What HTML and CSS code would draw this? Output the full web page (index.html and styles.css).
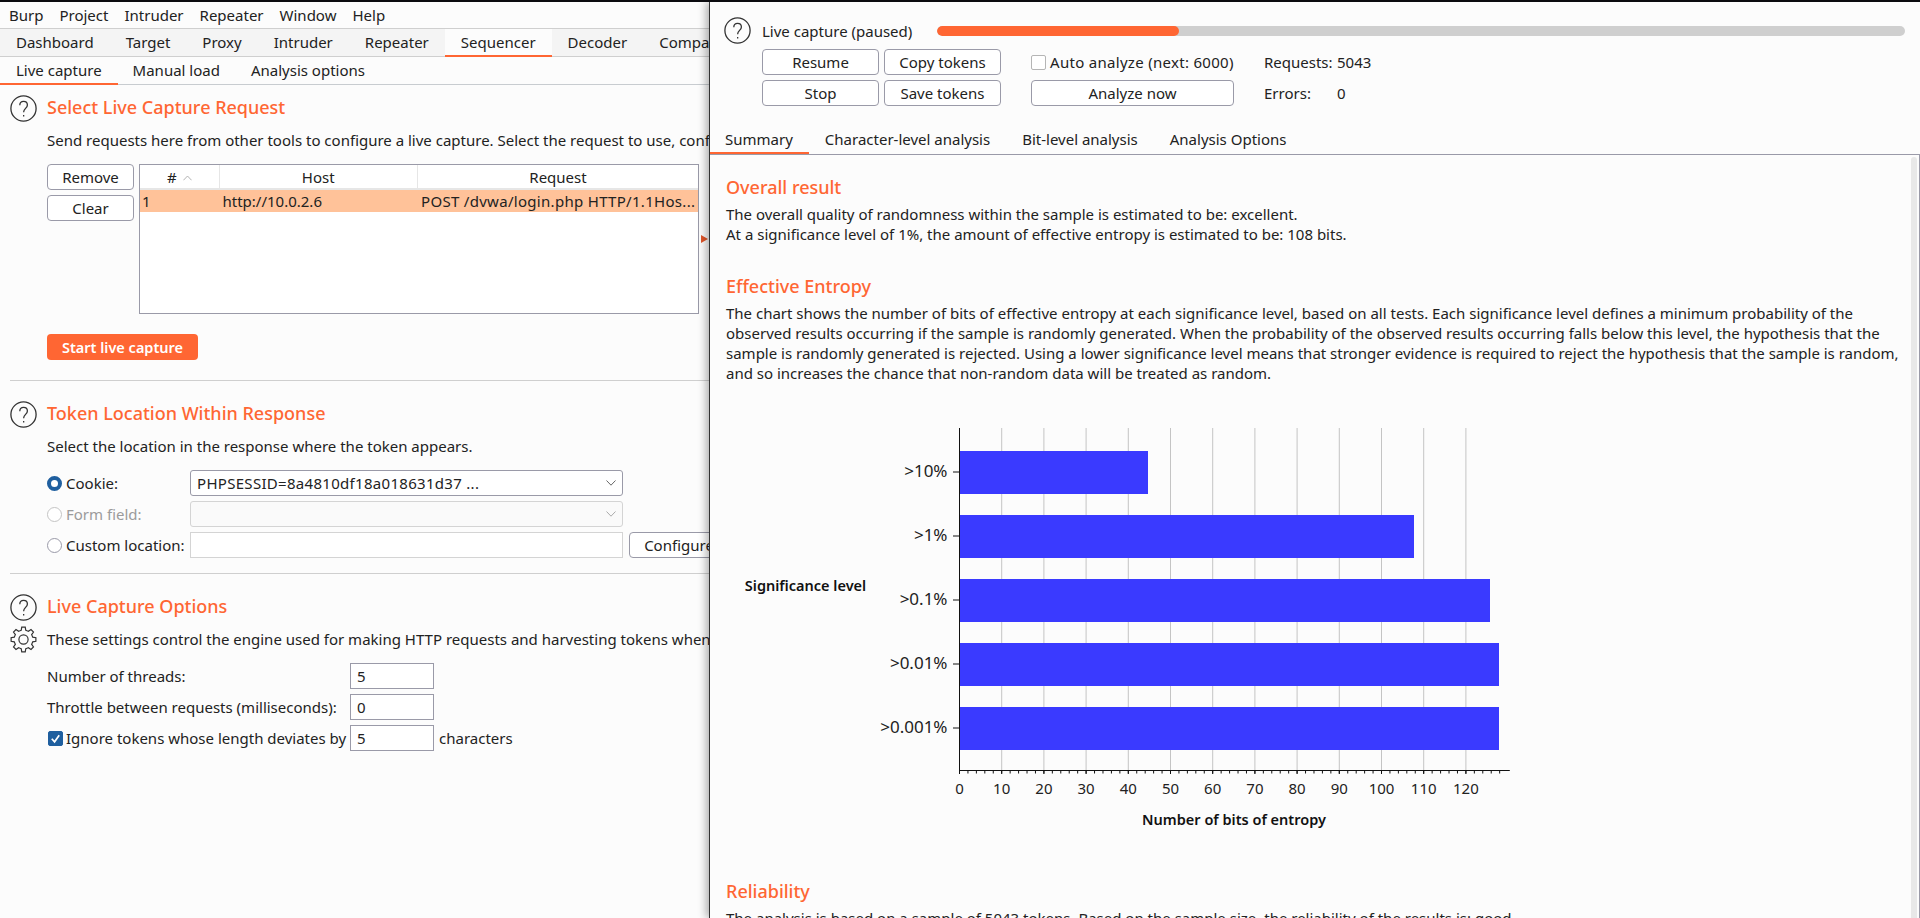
FILE: index.html
```html
<!DOCTYPE html>
<html lang="en">
<head>
<meta charset="utf-8">
<title>Burp Suite Sequencer</title>
<link rel="stylesheet" href="styles.css">
</head>
<body>
<svg class="defs" width="0" height="0" aria-hidden="true">
  <symbol id="help" viewBox="0 0 27 27">
    <circle cx="13.5" cy="13.5" r="12.6" fill="none" stroke="#333" stroke-width="1.3"/>
    <path d="M9.8 10.2c0-2.5 1.7-3.9 3.8-3.9s3.8 1.4 3.8 3.6c0 3.4-3.8 3.6-3.8 7.3" fill="none" stroke="#333" stroke-width="1.3"/>
    <path d="M13 20h1.3v1.6H13z" fill="#333"/>
  </symbol>
  <symbol id="gear" viewBox="-13.5 -13.5 27 27">
    <g fill="none" stroke="#333" stroke-width="1.2">
      <circle r="4.6"/>
      <path id="tooth" d="M-3.64 -8.78L-2.3 -9.22L-1.74 -12.38L1.74 -12.38L2.3 -9.22L3.64 -8.78"/>
      <use href="#tooth" transform="rotate(45)"/>
      <use href="#tooth" transform="rotate(90)"/>
      <use href="#tooth" transform="rotate(135)"/>
      <use href="#tooth" transform="rotate(180)"/>
      <use href="#tooth" transform="rotate(225)"/>
      <use href="#tooth" transform="rotate(270)"/>
      <use href="#tooth" transform="rotate(315)"/>
    </g>
  </symbol>
  <symbol id="chev" viewBox="0 0 10 6">
    <path d="M.5.5 5 5.2 9.5.5" fill="none" stroke="currentColor" stroke-width="1"/>
  </symbol>
</svg>

<div class="desktop">
  <main class="main-window">
    <nav class="menubar">
      <span>Burp</span><span>Project</span><span>Intruder</span><span>Repeater</span><span>Window</span><span>Help</span>
    </nav>
    <nav class="tabs">
      <span class="tab">Dashboard</span>
      <span class="tab">Target</span>
      <span class="tab">Proxy</span>
      <span class="tab">Intruder</span>
      <span class="tab">Repeater</span>
      <span class="tab tab-active">Sequencer</span>
      <span class="tab">Decoder</span>
      <span class="tab">Comparer</span>
    </nav>
    <nav class="subtabs">
      <span class="subtab subtab-active">Live capture</span>
      <span class="subtab">Manual load</span>
      <span class="subtab">Analysis options</span>
    </nav>

    <section class="section section-first">
      <svg class="help-icon"><use href="#help"/></svg>
      <h2 class="section-title">Select Live Capture Request</h2>
      <p class="section-desc">Send requests here from other tools to configure a live capture. Select the request to use, configure the other options below, then click "Start live capture".</p>
      <div class="request-area">
        <div class="side-buttons">
          <button class="btn btn-side">Remove</button>
          <button class="btn btn-side">Clear</button>
        </div>
        <div class="req-table">
          <div class="req-head">
            <span class="head-cell">#<svg class="sort-icon"><use href="#chev"/></svg></span>
            <span class="head-cell">Host</span>
            <span class="head-cell">Request</span>
          </div>
          <div class="req-row">
            <span>1</span>
            <span>http://10.0.2.6</span>
            <span class="digits">POST /dvwa/login.php HTTP/1.1Hos...</span>
          </div>
        </div>
      </div>
      <button class="btn-primary">Start live capture</button>
    </section>

    <section class="section section-next">
      <svg class="help-icon"><use href="#help"/></svg>
      <h2 class="section-title">Token Location Within Response</h2>
      <p class="section-desc">Select the location in the response where the token appears.</p>
      <div class="location-form">
        <label class="choice"><span class="radio radio-on"></span>Cookie:</label>
        <div class="combo"><span class="digits">PHPSESSID=8a4810df18a018631d37 ...</span><svg class="combo-chev"><use href="#chev"/></svg></div>
        <span></span>
        <label class="choice choice-off"><span class="radio radio-off"></span>Form field:</label>
        <div class="combo combo-off"><span></span><svg class="combo-chev"><use href="#chev"/></svg></div>
        <span></span>
        <label class="choice"><span class="radio"></span>Custom location:</label>
        <div class="combo combo-input"></div>
        <button class="btn btn-configure">Configure</button>
      </div>
    </section>

    <section class="section section-next">
      <svg class="help-icon"><use href="#help"/></svg>
      <h2 class="section-title">Live Capture Options</h2>
      <svg class="gear-icon"><use href="#gear"/></svg>
      <p class="section-desc">These settings control the engine used for making HTTP requests and harvesting tokens when performing the live capture.</p>
      <div class="options-form">
        <span>Number of threads:</span><input class="num-input" value="5" aria-label="Number of threads"><span></span>
        <span>Throttle between requests (milliseconds):</span><input class="num-input" value="0" aria-label="Throttle"><span></span>
        <label class="choice"><span class="check check-on"><svg viewBox="0 0 14 14"><path d="M3 7.2 6 10.6 11 3.4" fill="none" stroke="#fff" stroke-width="1.8"/></svg></span>Ignore tokens whose length deviates by</label><input class="num-input" value="5" aria-label="Deviation"><span>characters</span>
      </div>
    </section>
    <span class="split-arrow"></span>
  </main>

  <aside class="capture-window">
    <header class="capture-head">
      <div class="capture-top">
        <svg class="help-icon"><use href="#help"/></svg>
        <span class="capture-status">Live capture (paused)</span>
        <div class="progress"><div class="progress-fill"></div></div>
      </div>
      <div class="capture-controls">
        <button class="btn">Resume</button>
        <button class="btn">Copy tokens</button>
        <label class="choice auto-analyze digits"><span class="check"></span>Auto analyze (next: 6000)</label>
        <span class="stat"><span>Requests:</span><span>5043</span></span>
        <button class="btn">Stop</button>
        <button class="btn">Save tokens</button>
        <button class="btn btn-analyze">Analyze now</button>
        <span class="stat"><span>Errors:</span><span>0</span></span>
      </div>
    </header>
    <nav class="result-tabs">
      <span class="result-tab result-tab-active">Summary</span>
      <span class="result-tab">Character-level analysis</span>
      <span class="result-tab">Bit-level analysis</span>
      <span class="result-tab">Analysis Options</span>
    </nav>
    <div class="result-panel">
      <div class="result-body">
        <h3 class="result-title result-title-first">Overall result</h3>
        <p class="result-text">The overall quality of randomness within the sample is estimated to be: excellent.<br>At a significance level of 1%, the amount of effective entropy is estimated to be: 108 bits.</p>
        <h3 class="result-title">Effective Entropy</h3>
        <p class="result-text">The chart shows the number of bits of effective entropy at each significance level, based on all tests. Each significance level defines a minimum probability of the observed results occurring if the sample is randomly generated. When the probability of the observed results occurring falls below this level, the hypothesis that the sample is randomly generated is rejected. Using a lower significance level means that stronger evidence is required to reject the hypothesis that the sample is random, and so increases the chance that non-random data will be treated as random.</p>
        <svg class="chart" width="800" height="420" viewBox="0 0 800 420">
          <g class="chart-grid">
            <path d="M275.7 8V350M317.9 8V350M360.1 8V350M402.3 8V350M444.5 8V350M486.7 8V350M528.9 8V350M571.1 8V350M613.3 8V350M655.5 8V350M697.7 8V350M739.9 8V350"/>
          </g>
          <g class="chart-bars">
            <rect x="233.5" y="31" width="188.5" height="43"/>
            <rect x="233.5" y="95" width="454.5" height="43"/>
            <rect x="233.5" y="159" width="530.5" height="43"/>
            <rect x="233.5" y="223" width="539.5" height="43"/>
            <rect x="233.5" y="287" width="539.5" height="43"/>
          </g>
          <g class="chart-axis">
            <path d="M233.5 8V350.5H783.8"/>
            <path d="M227 52h6M227 116h6M227 180h6M227 244h6M227 308h6"/>
            <path d="M233.5 350V354M275.7 350V354M317.9 350V354M360.1 350V354M402.3 350V354M444.5 350V354M486.7 350V354M528.9 350V354M571.1 350V354M613.3 350V354M655.5 350V354M697.7 350V354M739.9 350V354"/>
            <line class="minor-ticks" x1="233" y1="352" x2="776" y2="352"/>
          </g>
          <g class="chart-y-labels">
            <text x="221.5" y="57">&gt;10%</text>
            <text x="221.5" y="121">&gt;1%</text>
            <text x="221.5" y="185">&gt;0.1%</text>
            <text x="221.5" y="249">&gt;0.01%</text>
            <text x="221.5" y="313">&gt;0.001%</text>
          </g>
          <g class="chart-x-labels">
            <text x="233.5" y="374">0</text><text x="275.7" y="374">10</text><text x="317.9" y="374">20</text><text x="360.1" y="374">30</text><text x="402.3" y="374">40</text><text x="444.5" y="374">50</text><text x="486.7" y="374">60</text><text x="528.9" y="374">70</text><text x="571.1" y="374">80</text><text x="613.3" y="374">90</text><text x="655.5" y="374">100</text><text x="697.7" y="374">110</text><text x="739.9" y="374">120</text>
          </g>
          <text class="chart-title" x="79.5" y="171">Significance level</text>
          <text class="chart-title" x="508" y="405">Number of bits of entropy</text>
        </svg>
        <h3 class="result-title result-title-reliability">Reliability</h3>
        <p class="result-text">The analysis is based on a sample of 5043 tokens. Based on the sample size, the reliability of the results is: good.</p>
      </div>
      <div class="scroll-track"></div>
    </div>
  </aside>
</div>
</body>
</html>
```

FILE: styles.css
```css
* { box-sizing: border-box; }
html, body { margin: 0; height: 100%; overflow: hidden; }
body {
  font-family: "Noto Sans", "Open Sans", sans-serif;
  font-size: 15px;
  line-height: 20px;
  color: #222;
  background: #fcfcfc;
}
button, input { font: inherit; color: inherit; }
p, h2, h3 { margin: 0; }
.defs { display: block; height: 0; }
.digits { letter-spacing: .3px; }

.desktop {
  position: relative;
  height: 918px;
  border-top: 2px solid #0b0b0f;
  overflow: hidden;
}

/* main window */
.main-window {
  position: relative;
  width: 710px;
  height: 916px;
  overflow: hidden;
  white-space: nowrap;
}
.menubar {
  display: flex;
  gap: 16px;
  height: 27px;
  padding: 3px 0 0 9px;
  border-bottom: 1px solid #cfcfcf;
  background: #fcfcfc;
}
.tabs {
  display: flex;
  height: 28px;
  background: #f4f4f4;
}
.tab {
  flex: none;
  padding: 3px 16px 0;
  border-bottom: 1px solid #cfcfcf;
}
.tab-active {
  background: #fcfcfc;
  border-bottom: 2px solid #ff6633;
}
.subtabs {
  display: flex;
  height: 28px;
  border-bottom: 1px solid #c8ccd0;
}
.subtab {
  padding: 3px 16px 0;
  height: 28px;
}
.subtab + .subtab { padding: 3px 16px 0 15px; }
.subtab-active { border-bottom: 2px solid #ff6633; }

.section {
  display: grid;
  grid-template-columns: 37px 1fr;
  margin-left: 10px;
  padding-top: 19px;
  padding-bottom: 15px;
  border-top: 1px solid #cfcfcf;
}
.section-first {
  margin-left: 0;
  padding: 9px 0 20px 10px;
  border-top: 0;
}
.help-icon { width: 27px; height: 27px; display: block; margin: 1px 0 -2px; }
.gear-icon { width: 27px; height: 27px; display: block; margin: 7px 0 -4px; grid-column: 1; }
.section-title {
  font-size: 18px;
  line-height: 26px;
  font-weight: 500;
  color: #ff6633;
}
.section-desc { grid-column: 2; margin-top: 10px; }

.request-area {
  grid-column: 2;
  display: grid;
  grid-template-columns: 87px 560px;
  column-gap: 5px;
  margin-top: 14px;
}
.side-buttons { display: flex; flex-direction: column; gap: 5px; }
.btn {
  height: 26px;
  padding: 0;
  background: #fff;
  border: 1px solid #9a9aa8;
  border-radius: 4px;
  line-height: 22px;
}
.req-table {
  height: 150px;
  background: #fff;
  border: 1px solid #9a9aa8;
}
.req-head, .req-row {
  display: grid;
  grid-template-columns: 79.5px 198.5px 1fr;
}
.req-head {
  height: 25px;
  border-bottom: 2px solid #e6e6e6;
  background: #fff;
}
.head-cell {
  text-align: center;
  line-height: 24px;
  border-right: 1px solid #e6e6e6;
}
.head-cell:last-child { border-right: 0; }
.sort-icon {
  width: 9px;
  height: 6px;
  margin-left: 6px;
  color: #aaa;
  transform: rotate(180deg);
  vertical-align: 2px;
}
.req-row {
  height: 22px;
  background: #ffc299;
  line-height: 22px;
}
.req-row span { padding-left: 2px; overflow: hidden; }
.req-row span:nth-child(2), .req-row span:nth-child(3) { padding-left: 3px; }
.btn-primary {
  grid-column: 2;
  justify-self: start;
  width: 151px;
  height: 26px;
  margin-top: 20px;
  padding: 0;
  border: 0;
  border-radius: 4px;
  background: #ff6633;
  color: #fff;
  font-size: 14.5px;
  font-weight: 600;
}
.location-form {
  grid-column: 2;
  display: grid;
  grid-template-columns: 143px 433px 1fr;
  grid-auto-rows: 26px;
  row-gap: 5px;
  margin-top: 14px;
  align-items: center;
}
.choice { display: flex; align-items: center; gap: 4px; }
.choice-off { color: #9b9b9b; }
.radio {
  width: 15px;
  height: 15px;
  border-radius: 50%;
  border: 1px solid #9a9aa8;
  background: #fff;
  flex: none;
}
.radio-on { border: 4px solid #1f5f9f; }
.radio-off { border-color: #c4c4c4; }
.combo {
  display: flex;
  align-items: center;
  justify-content: space-between;
  height: 26px;
  padding: 0 6px 0 6px;
  background: #fff;
  border: 1px solid #9a9aa8;
  border-radius: 3px;
}
.combo-off { border-color: #d4d4d4; background: #fafafa; color: #aaa; }
.combo-input { border-color: #d4d4d4; border-radius: 0; }
.combo-chev { width: 10px; height: 6px; color: #666; }
.combo-off .combo-chev { color: #aaa; }
.btn-configure { width: 100px; margin-left: 6px; }

.options-form {
  grid-column: 2;
  display: grid;
  grid-template-columns: 303px 84px 1fr;
  grid-auto-rows: 26px;
  row-gap: 5px;
  margin-top: 14px;
  align-items: center;
}
.num-input {
  width: 84px;
  height: 26px;
  padding: 0 6px;
  border: 1px solid #9a9aa8;
  background: #fff;
  border-radius: 0;
}
.options-form > span:last-child { padding-left: 5px; }
.check {
  width: 15px;
  height: 15px;
  flex: none;
  background: #fff;
  border: 1px solid #b5b5b5;
  border-radius: 2px;
}
.check svg { display: block; width: 100%; height: 100%; }
.check-on { background: #1f5f9f; border-color: #1f5f9f; margin-left: 1px; margin-right: -1px; }
.split-arrow {
  position: absolute;
  left: 701px;
  top: 233px;
  width: 0;
  height: 0;
  border-left: 7px solid #e0562a;
  border-top: 4px solid transparent;
  border-bottom: 4px solid transparent;
}

/* analysis window */
.capture-window {
  position: absolute;
  top: 0;
  left: 709px;
  right: 0;
  bottom: 0;
  display: flex;
  flex-direction: column;
  background: #fcfcfc;
  border-left: 1px solid #333;
  box-shadow: -3px 0 8px rgba(0, 0, 0, .3);
  white-space: nowrap;
}
.capture-head { padding: 15px 15px 0 14px; }
.capture-top { display: flex; align-items: center; height: 27px; }
.capture-top .help-icon { margin: 0; flex: none; }
.capture-status { margin-left: 11px; width: 175px; flex: none; }
.progress {
  flex: 1;
  height: 10px;
  border-radius: 5px;
  background: #cfcfcf;
  overflow: hidden;
}
.progress-fill {
  width: 25%;
  height: 100%;
  background: #ff6633;
  border-radius: 5px;
}
.capture-controls {
  display: grid;
  grid-template-columns: 117px 117px 203px auto;
  column-gap: 5px;
  row-gap: 5px;
  grid-auto-rows: 26px;
  margin: 5px 0 0 38px;
  align-items: center;
}
.auto-analyze { margin-left: 25px; width: 203px; }
.btn-analyze { margin-left: 25px; width: 203px; }
.stat { display: flex; margin-left: 50px; }
.stat span:first-child { width: 73px; }

.result-tabs {
  display: flex;
  height: 28px;
  margin-top: 20px;
}
.result-tab { padding: 3px 16px 0; height: 28px; }
.result-tab:first-child { padding-left: 15px; }
.result-tab-active { border-bottom: 2px solid #ff6633; }

.result-panel {
  flex: 1;
  min-height: 0;
  display: flex;
  border-top: 1px solid #9a9aa8;
  border-right: 1px solid #9a9aa8;
  overflow: hidden;
}
.result-body {
  flex: 1;
  min-width: 0;
  padding: 19px 10px 0 16px;
  white-space: normal;
}
.scroll-track {
  flex: none;
  width: 6px;
  margin: 2px 2px 0 0;
  background: #e8e8e8;
  border-radius: 3px 3px 0 0;
}
.result-title {
  font-size: 18px;
  line-height: 26px;
  font-weight: 500;
  color: #ff6633;
  margin-top: 29px;
}
.result-title-first { margin-top: 0; }
.result-title-reliability { margin-top: 38px; }
.result-text { margin-top: 4px; }
.chart { display: block; margin-top: 37px; }
.chart-grid path { fill: none; stroke: #c4c4c4; stroke-width: 1; }
.chart-bars rect { fill: #3a3aff; }
.chart-axis path { fill: none; stroke: #111; stroke-width: 1; }
.minor-ticks { stroke: #111; stroke-width: 3; stroke-dasharray: 1 7.44; }
.chart-y-labels text { text-anchor: end; font-size: 17px; fill: #222; }
.chart-x-labels text { text-anchor: middle; font-size: 15px; fill: #222; }
.chart-title { font-size: 14.5px; font-weight: 600; fill: #111; text-anchor: middle; }
```
